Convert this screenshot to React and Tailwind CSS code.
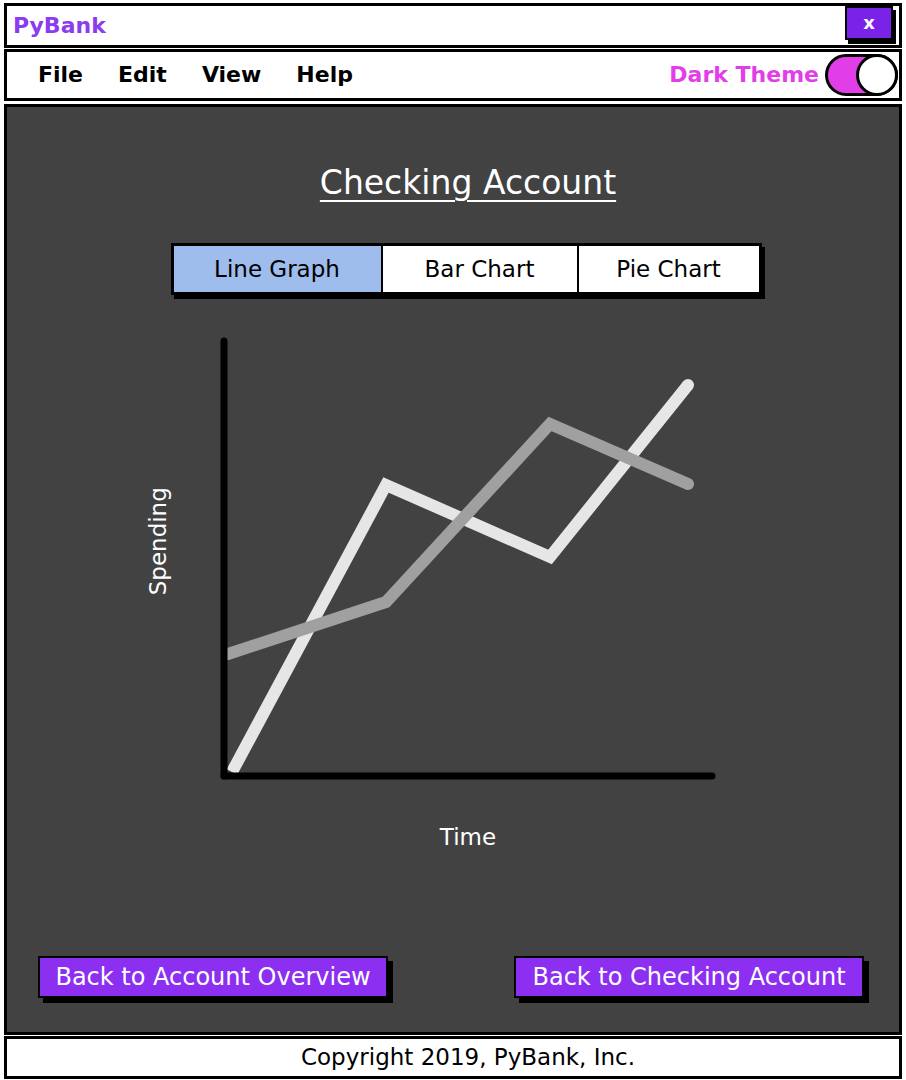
import { useState } from "react";

const font = { fontFamily: '"DejaVu Sans", "Liberation Sans", sans-serif' };

const tabs = ["Line Graph", "Bar Chart", "Pie Chart"];

function LineChart() {
  return (
    <svg width="500" height="446" viewBox="0 0 500 446">
      <polyline
        points="14,437 168,150 332,222 470,50"
        fill="none"
        stroke="#e6e6e6"
        strokeWidth="12"
        strokeLinecap="butt"
        strokeLinejoin="miter"
      />
      <circle cx="470" cy="50" r="6" fill="#e6e6e6" />
      <polyline
        points="10,319 168,267 332,89 470,149"
        fill="none"
        stroke="#a0a0a0"
        strokeWidth="12"
        strokeLinecap="round"
        strokeLinejoin="miter"
      />
      <line x1="6" y1="6" x2="6" y2="441" stroke="#000" strokeWidth="7" strokeLinecap="round" />
      <line x1="6" y1="441" x2="494" y2="441" stroke="#000" strokeWidth="7" strokeLinecap="round" />
    </svg>
  );
}

export default function App() {
  const [active, setActive] = useState(0);
  const [dark, setDark] = useState(true);

  return (
    <div className="w-[906px] h-[1080px] bg-white pt-[3px] px-[4px] flex flex-col" style={font}>
      {/* title bar */}
      <div className="h-[45px] border-[3px] border-black bg-white flex items-center justify-between pl-[6px] pr-[3px]">
        <span className="text-[22px] font-bold text-[#8b3cf0]">PyBank</span>
        <button className="-mt-[6px] mr-[3px] w-[48px] h-[34px] bg-[#7b22e8] border-[2px] border-black shadow-[3px_4px_0_#000] text-white text-[18px] font-bold leading-none">
          x
        </button>
      </div>

      {/* menu bar */}
      <div className="mt-[1px] h-[52px] border-[3px] border-black bg-white flex items-center pl-[31px] pr-[1px]">
        <nav className="flex gap-[35px] text-[22px] font-bold text-black -mt-[2px]">
          <span>File</span>
          <span>Edit</span>
          <span>View</span>
          <span>Help</span>
        </nav>
        <div className="ml-auto flex items-center gap-[6px]">
          <span className="text-[22px] font-bold text-[#e23ee8] -mt-[2px]">Dark Theme</span>
          <button
            onClick={() => setDark(!dark)}
            className="relative w-[73px] h-[42px] rounded-full border-[3px] border-black bg-[#e23ee8]"
          >
            <span className="absolute right-[-3px] top-[-3px] w-[42px] h-[42px] rounded-full border-[3px] border-black bg-white" />
          </button>
        </div>
      </div>

      {/* main panel */}
      <main className="mt-[3px] h-[931px] border-[3px] border-black bg-[#424242] flex flex-col items-center pl-[30px]">
        <h1 className="mt-[56px] text-[33px] text-white underline underline-offset-[6px] decoration-[2px] leading-[40px]">
          Checking Account
        </h1>

        <div className="mt-[40px] flex border-[3px] border-black bg-black shadow-[3px_4px_0_#000] ml-[-4px]">
          {tabs.map((t, i) => (
            <button
              key={t}
              onClick={() => setActive(i)}
              className={
                (i === active ? "bg-[#9ebcec] " : "bg-white ") +
                (i === 0 ? "w-[207px] " : i === 1 ? "w-[194px] ml-[2px] " : "w-[180px] ml-[2px] ") +
                "h-[46px] text-[23px] text-black"
              }
            >
              {t}
            </button>
          ))}
        </div>

        <div className="mt-[40px] self-start flex items-center pl-[109px]">
          <div className="w-[24px] h-[446px] pb-[34px] flex items-center justify-center">
            <span className="-rotate-90 whitespace-nowrap text-[23px] text-white">Spending</span>
          </div>
          <div className="ml-[48px]">
            <LineChart />
          </div>
        </div>

        <div className="mt-[39px] text-[23px] text-white">Time</div>

        <div className="mt-[101px] self-stretch flex justify-between pl-[1px] pr-[35px]">
          <button className="w-[350px] h-[42px] bg-[#8c2ff0] border-[2px] border-black shadow-[5px_5px_0_#000] text-white text-[24px]">
            Back to Account Overview
          </button>
          <button className="w-[350px] h-[42px] bg-[#8c2ff0] border-[2px] border-black shadow-[5px_5px_0_#000] text-white text-[24px]">
            Back to Checking Account
          </button>
        </div>
      </main>

      {/* footer */}
      <footer className="mt-[1px] h-[43px] border-[3px] border-black bg-white flex items-center justify-center pl-[30px] text-[23px] text-black">
        Copyright 2019, PyBank, Inc.
      </footer>
    </div>
  );
}
